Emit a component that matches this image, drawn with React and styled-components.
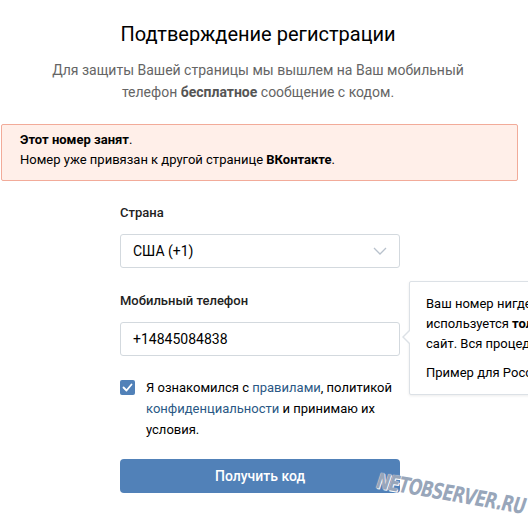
import React from "react";
import styled, { createGlobalStyle } from "styled-components";

const GlobalStyle = createGlobalStyle`
  body {
    margin: 0;
    background: #fff;
    font-family: Roboto, "Noto Sans", sans-serif;
    -webkit-font-smoothing: antialiased;
  }
`;

const Page = styled.div`
  position: relative;
  width: 528px;
  height: 520px;
  overflow: hidden;
  background: #fff;
`;

const Header = styled.div`
  width: 516px;
  padding-top: 21px;
  text-align: center;
`;

const Title = styled.h1`
  margin: 0;
  font-size: 20px;
  font-weight: 400;
  line-height: 26px;
  color: #000;
`;

const Subtitle = styled.p`
  margin: 12px 0 0;
  font-size: 14px;
  line-height: 22px;
  color: #656565;

  b {
    font-weight: 700;
    color: #555;
  }
`;

const ErrorBox = styled.div`
  margin: 21px 10px 0 1px;
  padding: 5px 18px 10px;
  background: #ffefe9;
  border: 1px solid #f2ab99;
  border-radius: 2px;
  font-size: 13px;
  line-height: 20px;
  color: #000;

  b {
    font-weight: 700;
  }
`;

const Form = styled.form`
  width: 280px;
  margin: 24px 0 0 120px;
  display: flex;
  flex-direction: column;
`;

const Field = styled.div`
  position: relative;
  display: flex;
  flex-direction: column;
  margin-bottom: ${(p) => p.gap || 0}px;
`;

const Label = styled.label`
  font-size: 13px;
  font-weight: 500;
  line-height: 16px;
  color: #222;
  margin-bottom: 13px;
`;

const Box = styled.div`
  box-sizing: border-box;
  height: 34px;
  display: flex;
  align-items: center;
  justify-content: space-between;
  padding: 0 12px 0 12px;
  border: 1px solid #d3d9de;
  border-radius: 3px;
  font-size: 14px;
  color: #000;
  background: #fff;
`;

const Tooltip = styled.div`
  position: absolute;
  left: 289px;
  top: -12px;
  width: 260px;
  box-sizing: border-box;
  padding: 12px 15px 11px 16px;
  background: #fff;
  border: 1px solid #dce1e6;
  border-radius: 2px;
  box-shadow: 0 1px 3px rgba(0, 0, 0, 0.08);
  font-size: 13px;
  line-height: 20px;
  color: #000;
  white-space: nowrap;

  b {
    font-weight: 700;
  }

  p {
    margin: 0;
  }

  p + p {
    margin-top: 9px;
  }

  &::before,
  &::after {
    content: "";
    position: absolute;
    top: 48px;
    width: 0;
    height: 0;
    border: 7px solid transparent;
  }

  &::before {
    left: -15px;
    border-right-color: #dce1e6;
  }

  &::after {
    left: -13px;
    border-right-color: #fff;
  }
`;

const CheckRow = styled.div`
  display: flex;
  align-items: flex-start;
  gap: 11px;
  margin-top: 24px;
`;

const Check = styled.span`
  flex: none;
  width: 15px;
  height: 15px;
  border-radius: 2px;
  background: #5181b8;
  display: flex;
  align-items: center;
  justify-content: center;
`;

const CheckText = styled.div`
  font-size: 13px;
  line-height: 21px;
  color: #000;
  margin-top: -3px;

  a {
    color: #2a5885;
    text-decoration: none;
  }
`;

const Button = styled.button`
  margin-top: 19px;
  height: 34px;
  border: 0;
  border-radius: 4px;
  background: #5181b8;
  color: #fff;
  font-family: Roboto, "Noto Sans", sans-serif;
  font-size: 14px;
  font-weight: 500;
  cursor: pointer;
`;

const Watermark = styled.div`
  position: absolute;
  left: 377px;
  top: 468px;
  font-family: "DejaVu Sans Condensed", "DejaVu Sans", sans-serif;
  font-size: 22px;
  line-height: 26px;
  font-weight: 700;
  font-style: italic;
  letter-spacing: -1px;
  color: #98a6ba;
  transform: rotate(10deg) scaleX(0.8);
  transform-origin: left center;
  text-shadow: 0 0 1px #fff, 1px 1px 0 #fff;
  white-space: nowrap;
`;

const ChevronDown = () => (
  <svg width="14" height="8" viewBox="0 0 14 8" fill="none">
    <path d="M1 1l6 6 6-6" stroke="#b8c1cc" strokeWidth="1.3" />
  </svg>
);

const Tick = () => (
  <svg width="11" height="9" viewBox="0 0 11 9" fill="none">
    <path d="M1.5 4.5l3 3 5-6" stroke="#fff" strokeWidth="1.8" strokeLinecap="round" strokeLinejoin="round" />
  </svg>
);

export default function App() {
  return (
    <Page>
      <GlobalStyle />
      <Header>
        <Title>Подтверждение регистрации</Title>
        <Subtitle>
          Для защиты Вашей страницы мы вышлем на Ваш мобильный
          <br />
          телефон <b>бесплатное</b> сообщение с кодом.
        </Subtitle>
      </Header>
      <ErrorBox>
        <b>Этот номер занят</b>.
        <br />
        Номер уже привязан к другой странице <b>ВКонтакте</b>.
      </ErrorBox>
      <Form onSubmit={(e) => e.preventDefault()}>
        <Field gap={25}>
          <Label>Страна</Label>
          <Box>
            <span>США (+1)</span>
            <ChevronDown />
          </Box>
        </Field>
        <Field>
          <Label>Мобильный телефон</Label>
          <Box>+14845084838</Box>
          <Tooltip>
            <p>
              Ваш номер нигде не будет показан,
              <br />
              используется <b>только</b> для входа на
              <br />
              сайт. Вся процедура бесплатна.
            </p>
            <p>Пример для России: +79211234567</p>
          </Tooltip>
        </Field>
        <CheckRow>
          <Check>
            <Tick />
          </Check>
          <CheckText>
            Я ознакомился с <a href="#">правилами</a>, политикой
            <br />
            <a href="#">конфиденциальности</a> и принимаю их
            <br />
            условия.
          </CheckText>
        </CheckRow>
        <Button type="submit">Получить код</Button>
      </Form>
      <Watermark>NETOBSERVER.RU</Watermark>
    </Page>
  );
}
